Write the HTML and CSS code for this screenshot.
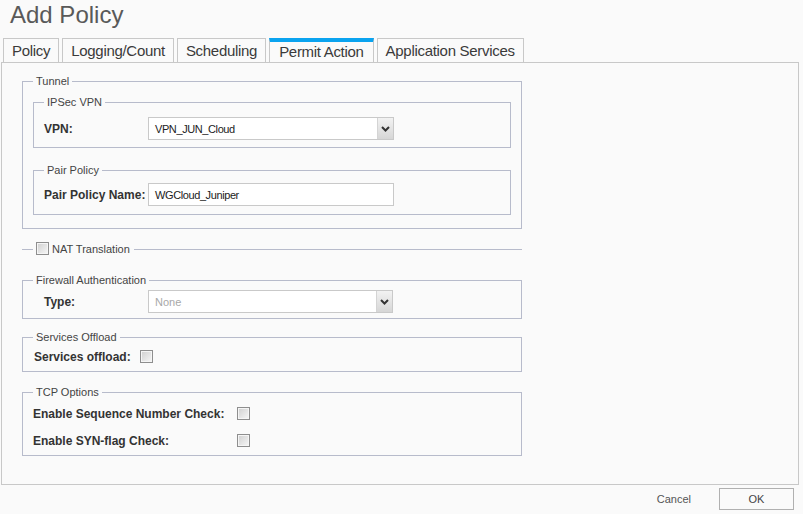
FILE: index.html
```html
<!DOCTYPE html>
<html>
<head>
<meta charset="utf-8">
<title>Add Policy</title>
<link rel="stylesheet" href="styles.css">
</head>
<body>
<div class="dialog">
  <div class="title">Add Policy</div>
  <div class="tabs">
    <div class="tab">Policy</div>
    <div class="tab">Logging/Count</div>
    <div class="tab">Scheduling</div>
    <div class="tab active">Permit Action</div>
    <div class="tab">Application Services</div>
  </div>
  <div class="panel">
    <fieldset class="fs fs-tunnel">
      <legend>Tunnel</legend>
      <fieldset class="fs fs-ipsec">
        <legend>IPSec VPN</legend>
        <div class="row">
          <label class="lbl lbl-inner">VPN:</label>
          <div class="select"><span class="val">VPN_JUN_Cloud</span><span class="arrow"><svg width="9" height="6" viewBox="0 0 9 6"><path d="M1 1 L4.5 4.5 L8 1" fill="none" stroke="#333" stroke-width="2"/></svg></span></div>
        </div>
      </fieldset>
      <fieldset class="fs fs-pair">
        <legend>Pair Policy</legend>
        <div class="row">
          <label class="lbl lbl-inner">Pair Policy Name:</label>
          <div class="input">WGCloud_Juniper</div>
        </div>
      </fieldset>
    </fieldset>

    <div class="divider">
      <span class="cb"></span>
      <span class="divider-text">NAT Translation</span>
    </div>

    <fieldset class="fs fs-fw">
      <legend>Firewall Authentication</legend>
      <div class="row">
        <label class="lbl lbl-type">Type:</label>
        <div class="select disabled"><span class="val">None</span><span class="arrow"><svg width="9" height="6" viewBox="0 0 9 6"><path d="M1 1 L4.5 4.5 L8 1" fill="none" stroke="#333" stroke-width="2"/></svg></span></div>
      </div>
    </fieldset>

    <fieldset class="fs fs-offload">
      <legend>Services Offload</legend>
      <div class="row row-cb">
        <label class="lbl">Services offload:</label>
        <span class="cb cb-offload"></span>
      </div>
    </fieldset>

    <fieldset class="fs fs-tcp">
      <legend>TCP Options</legend>
      <div class="row row-cb">
        <label class="lbl lbl-tcp">Enable Sequence Number Check:</label>
        <span class="cb"></span>
      </div>
      <div class="row row-cb row-gap">
        <label class="lbl lbl-tcp">Enable SYN-flag Check:</label>
        <span class="cb"></span>
      </div>
    </fieldset>
  </div>
  <div class="footer">
    <span class="cancel">Cancel</span>
    <span class="ok">OK</span>
  </div>
</div>
</body>
</html>
```

FILE: styles.css
```css
html, body {
  margin: 0;
  padding: 0;
  background: #fafafa;
}
body {
  font-family: "Liberation Sans", Arial, sans-serif;
  color: #333;
  width: 803px;
  height: 514px;
  overflow: hidden;
}
.title {
  box-sizing: border-box;
  height: 38px;
  padding: 1px 0 0 10px;
  font-size: 24px;
  line-height: 27px;
  color: #595959;
}
.tabs {
  display: flex;
  gap: 3px;
  margin-left: 3px;
  height: 24px;
}
.tab {
  box-sizing: border-box;
  height: 24px;
  padding: 0 8px;
  border: 1px solid #c8c8c8;
  border-bottom: none;
  font-size: 15px;
  letter-spacing: -0.3px;
  line-height: 23px;
  color: #3a3a3a;
  background: #fafafa;
}
.tab.active {
  border-top: 4px solid #0aa3ef;
  line-height: 20px;
  padding: 0 9px;
}
.panel {
  box-sizing: border-box;
  margin-left: 1px;
  width: 798px;
  height: 423px;
  border: 1px solid #c8c8c8;
  background: #fafafa;
  padding: 12px 0 0 20px;
}
.fs {
  margin: 0;
  min-inline-size: 0;
  border: 1px solid #b7bbcb;
  padding: 0 10px;
  box-sizing: border-box;
}
.fs legend {
  padding: 0 3px;
  font-size: 11px;
  line-height: 13px;
  color: #444;
}
.fs-tunnel {
  width: 500px;
  padding-top: 8px;
  padding-bottom: 13px;
}
.fs-ipsec {
  padding-top: 8px;
  padding-bottom: 7px;
}
.fs-pair {
  margin-top: 16px;
  padding-top: 6px;
  padding-bottom: 8px;
}
.row {
  display: flex;
  align-items: center;
}
.lbl {
  font-size: 12px;
  font-weight: bold;
  color: #333;
  white-space: nowrap;
}
.lbl-inner {
  width: 104px;
}
.lbl-type {
  width: 104px;
  padding-left: 11px;
}
.lbl-tcp {
  width: 204px;
}
.select, .input {
  box-sizing: border-box;
  width: 246px;
  height: 23px;
  border: 1px solid #c9c9c9;
  background: #fff;
  display: flex;
  align-items: center;
  font-size: 11px;
  letter-spacing: -0.4px;
  color: #222;
}
.input {
  padding-left: 6px;
}
.select .val {
  flex: 1;
  padding-left: 6px;
}
.select.disabled {
  width: 245px;
}
.select.disabled .val {
  color: #a8a8a8;
  letter-spacing: 0;
}
.arrow {
  box-sizing: border-box;
  width: 16px;
  height: 21px;
  border-left: 1px solid #d4d4d4;
  background: linear-gradient(#f2f2f2, #d6d6d6);
  display: flex;
  align-items: center;
  justify-content: center;
}
.divider {
  width: 500px;
  height: 13px;
  margin-top: 13px;
  display: flex;
  align-items: center;
}
.divider::before {
  content: "";
  width: 11px;
  height: 1px;
  background: #b7bbcb;
  margin-right: 3px;
  margin-top: 2px;
}
.divider::after {
  content: "";
  flex: 1;
  height: 1px;
  background: #b7bbcb;
  margin-left: 4px;
  margin-top: 2px;
}
.divider-text {
  margin-left: 3px;
  font-size: 11px;
  color: #444;
}
.cb {
  box-sizing: border-box;
  display: inline-block;
  width: 13px;
  height: 13px;
  border: 1px solid #8e8e8e;
  box-shadow: inset 0 0 0 1px #f5f5f5;
  background: linear-gradient(135deg, #cfcfcf, #f7f7f7);
  flex: none;
}
.fs-fw {
  width: 500px;
  margin-top: 19px;
  padding-top: 3px;
  padding-bottom: 5px;
}
.fs-offload {
  width: 500px;
  margin-top: 12px;
  padding-top: 6px;
  padding-bottom: 8px;
}
.fs-offload .lbl {
  padding-left: 1px;
}
.cb-offload {
  margin-left: 9px;
}
.row-cb {
  height: 13px;
}
.fs-tcp {
  width: 500px;
  margin-top: 14px;
  padding-top: 8px;
  padding-bottom: 8px;
}
.row-gap {
  margin-top: 14px;
}
.footer {
  display: flex;
  justify-content: flex-end;
  align-items: center;
  margin-top: 3px;
  padding-right: 9px;
  height: 22px;
}
.cancel {
  font-size: 11px;
  color: #555;
  margin-right: 28px;
}
.ok {
  box-sizing: border-box;
  width: 75px;
  height: 22px;
  border: 1px solid #b0b0b0;
  background: #fafafa;
  font-size: 11px;
  color: #444;
  display: flex;
  align-items: center;
  justify-content: center;
}
```
